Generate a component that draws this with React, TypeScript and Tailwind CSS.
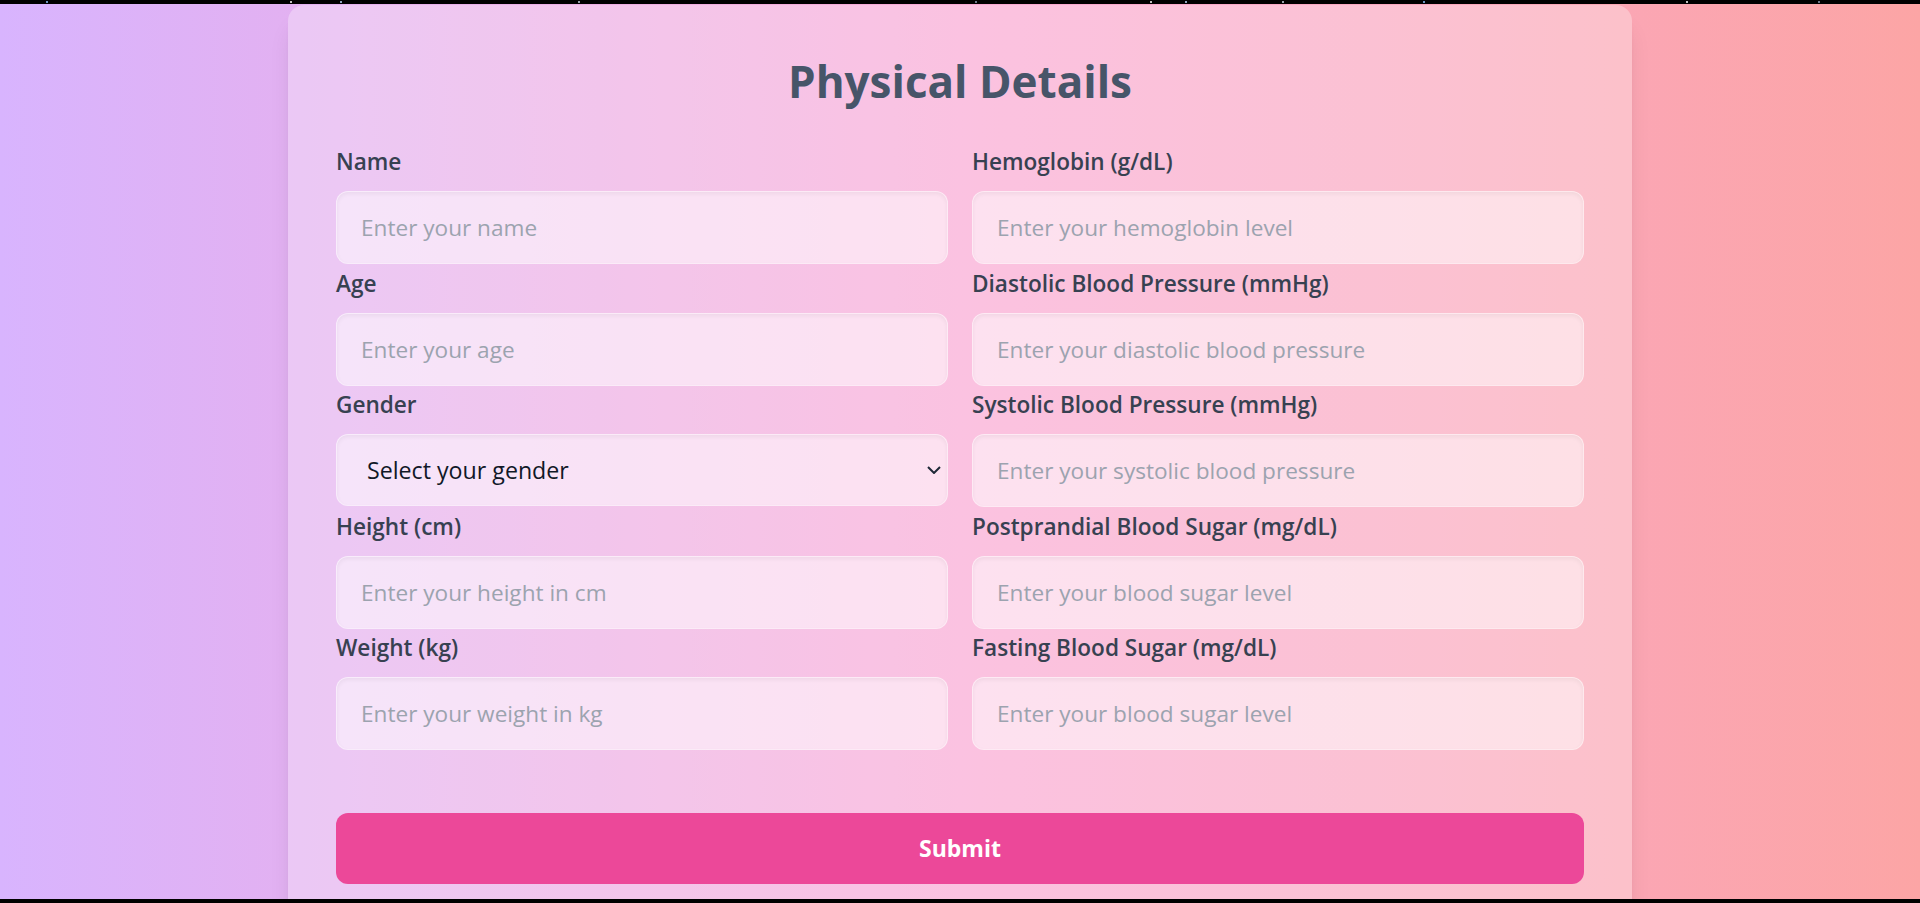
import { useState } from 'react'

type Field = {
  label: string;
  name: string;
  placeholder: string;
  kind?: 'select';
};

// row-major so the 2-col grid lines up left/right
const fields: Field[] = [
  { label: 'Name', name: 'name', placeholder: 'Enter your name' },
  { label: 'Hemoglobin (g/dL)', name: 'hemoglobin', placeholder: 'Enter your hemoglobin level' },
  { label: 'Age', name: 'age', placeholder: 'Enter your age' },
  { label: 'Diastolic Blood Pressure (mmHg)', name: 'diastolic', placeholder: 'Enter your diastolic blood pressure' },
  { label: 'Gender', name: 'gender', placeholder: 'Select your gender', kind: 'select' },
  { label: 'Systolic Blood Pressure (mmHg)', name: 'systolic', placeholder: 'Enter your systolic blood pressure' },
  { label: 'Height (cm)', name: 'height', placeholder: 'Enter your height in cm' },
  { label: 'Postprandial Blood Sugar (mg/dL)', name: 'postprandial', placeholder: 'Enter your blood sugar level' },
  { label: 'Weight (kg)', name: 'weight', placeholder: 'Enter your weight in kg' },
  { label: 'Fasting Blood Sugar (mg/dL)', name: 'fasting', placeholder: 'Enter your blood sugar level' },
]

const stars = [
  { left: 'left-[46px]', color: 'bg-blue-300' },
  { left: 'left-[290px]', color: 'bg-white' },
  { left: 'left-[340px]', color: 'bg-blue-200' },
  { left: 'left-[578px]', color: 'bg-slate-300' },
  { left: 'left-[975px]', color: 'bg-slate-400' },
  { left: 'left-[1150px]', color: 'bg-white' },
  { left: 'left-[1185px]', color: 'bg-blue-200' },
  { left: 'left-[1282px]', color: 'bg-slate-300' },
  { left: 'left-[1423px]', color: 'bg-blue-300' },
  { left: 'left-[1686px]', color: 'bg-white' },
  { left: 'left-[1818px]', color: 'bg-slate-400' },
]

export default function App() {
  const [values, setValues] = useState<Record<string, string>>({})

  const update = (name: string, value: string) => {
    setValues((prev) => ({ ...prev, [name]: value }))
  }

  return (
    <div className="h-screen flex flex-col bg-black font-['Open_Sans',sans-serif] overflow-hidden">
      {/* starry strip peeking out on top */}
      <div className="h-[4px] relative shrink-0">
        {stars.map((s, i) => (
          <span key={i} className={`absolute top-[1px] w-[2px] h-[2px] rounded-full ${s.left} ${s.color}`} />
        ))}
      </div>

      <div className="flex-1 min-h-0 bg-linear-to-r from-[#d8b4fe] via-[#f9a8d4] to-[#fca5a5] flex justify-center overflow-hidden">
        <form
          className="w-[1344px] mt-[1px] self-start rounded-t-2xl bg-white/30 shadow-xl px-12 pt-12 pb-12"
          onSubmit={(e) => e.preventDefault()}
        >
          <h1 className="text-[44px] leading-[56px] font-bold text-[#475569] text-center mb-[38px]">
            Physical Details
          </h1>

          <div className="grid grid-cols-2 gap-x-6 gap-y-[4.5px]">
            {fields.map((f) => (
              <div key={f.name} className="flex flex-col">
                <label htmlFor={f.name} className="block text-[22.6px] leading-[30px] font-semibold text-[#374151] mb-[14px]">
                  {f.label}
                </label>
                {f.kind === 'select' ? (
                  <div className="relative">
                    <select
                      id={f.name}
                      value={values[f.name] ?? ''}
                      onChange={(e) => update(f.name, e.target.value)}
                      className="appearance-none w-full h-[72px] rounded-xl border border-white/30 bg-white/50 shadow-inner pl-[30px] pr-10 text-[23.2px] text-[#111827] outline-none"
                    >
                      <option value="">{f.placeholder}</option>
                      <option value="male">Male</option>
                      <option value="female">Female</option>
                      <option value="other">Other</option>
                    </select>
                    <svg
                      className="absolute right-[7px] top-1/2 -translate-y-1/2 pointer-events-none"
                      width="14"
                      height="8"
                      viewBox="0 0 14 8"
                      fill="none"
                    >
                      <path d="M1 1l6 6 6-6" stroke="#1f2937" strokeWidth="2" />
                    </svg>
                  </div>
                ) : (
                  <input
                    id={f.name}
                    type="text"
                    value={values[f.name] ?? ''}
                    onChange={(e) => update(f.name, e.target.value)}
                    placeholder={f.placeholder}
                    className="w-full h-[73px] rounded-xl border border-white/30 bg-white/50 shadow-inner px-6 text-[22.6px] text-[#374151] placeholder:text-[#9ca3af] outline-none"
                  />
                )}
              </div>
            ))}
          </div>

          <button
            type="submit"
            className="mt-[63px] w-full h-[71px] rounded-xl bg-[#ec4899] text-white text-[23px] font-bold"
          >
            Submit
          </button>
        </form>
      </div>

      <div className="h-[4px] shrink-0" />
    </div>
  )
}
